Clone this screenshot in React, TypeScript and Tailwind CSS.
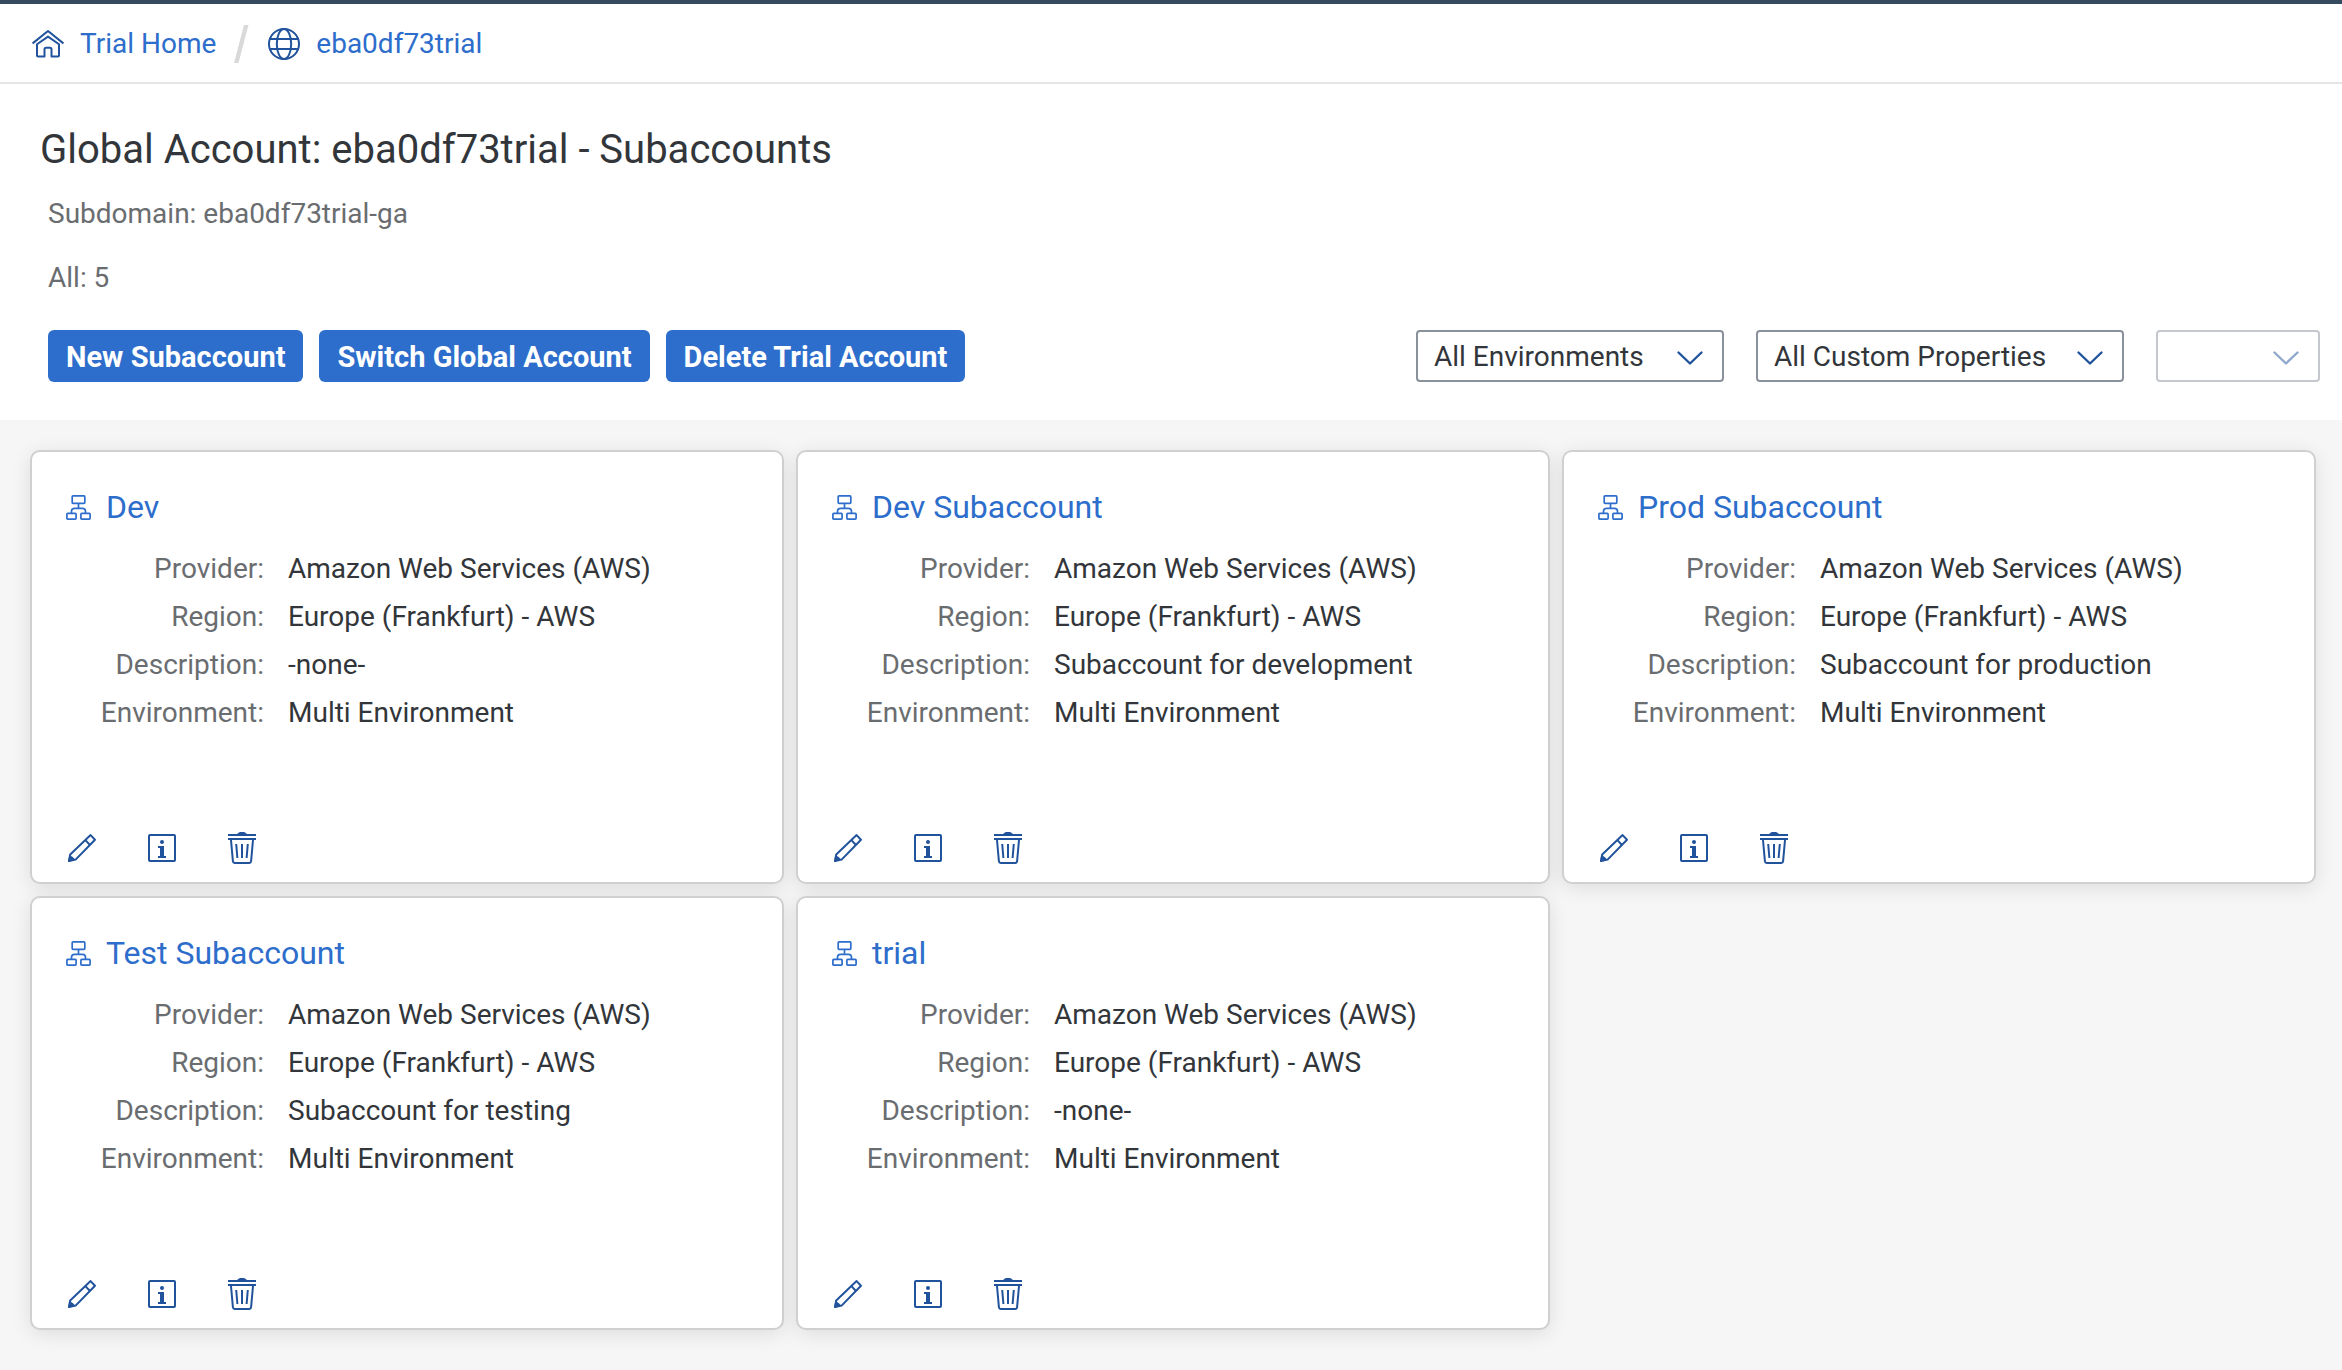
import { useState } from 'react'
import type { ReactNode } from 'react'

type Subaccount = { name: string; description: string }

const subaccounts: Subaccount[] = [
  { name: 'Dev', description: '-none-' },
  { name: 'Dev Subaccount', description: 'Subaccount for development' },
  { name: 'Prod Subaccount', description: 'Subaccount for production' },
  { name: 'Test Subaccount', description: 'Subaccount for testing' },
  { name: 'trial', description: '-none-' },
]

function HomeIcon() {
  return (
    <svg className="size-8 shrink-0" viewBox="0 0 32 32" fill="none" stroke="#21539c" strokeWidth="2" strokeLinejoin="round" aria-hidden="true">
      <path d="M0.6 15.4 16 3l15.4 12.4" />
      <path d="M5 16.2v11.3a1 1 0 0 0 1 1h6.5v-7.2a1.5 1.5 0 0 1 1.5-1.5h4a1.5 1.5 0 0 1 1.5 1.5v7.2H26a1 1 0 0 0 1-1V16.2L16 8.6Z" />
    </svg>
  )
}

function GlobeIcon() {
  return (
    <svg className="size-8 shrink-0" viewBox="0 0 32 32" fill="none" stroke="#21539c" strokeWidth="2" aria-hidden="true">
      <circle cx="16" cy="16" r="15" />
      <ellipse cx="16" cy="16" rx="7.2" ry="15" />
      <path d="M2 11h28M2 21h28" />
    </svg>
  )
}

function HierarchyIcon() {
  return (
    <svg className="h-[26px] w-[26px] shrink-0" viewBox="0 0 26 26" fill="none" stroke="#2d6dcb" strokeWidth="1.7" strokeLinejoin="round" aria-hidden="true">
      <rect x="6.200" y="1.900" width="12.600" height="7.400" rx="0.8" />
      <rect x="0.9" y="19.400" width="9.200" height="5.700" rx="0.8" />
      <rect x="14.900" y="19.400" width="9.200" height="5.700" rx="0.8" />
      <path d="M12.500 9.300v5M5.500 19.400v-2.100a3 3 0 0 1 3-3h8a3 3 0 0 1 3 3v2.100" />
    </svg>
  )
}

function PencilIcon() {
  return (
    <svg className="size-8" viewBox="0 0 32 32" fill="none" stroke="#21539c" strokeWidth="2" strokeLinejoin="round" aria-hidden="true">
      <path d="M24.600 3.100 29 7.800 9.600 27.600 3 29l1.200-6.600Z" />
      <path d="m19.600 8.400 4.400 4.600" />
      <path d="M3.200 23.400c2.600.3 4.800 2 5.600 4.600L2 30Z" fill="#21539c" stroke="none" />
    </svg>
  )
}

function InfoIcon() {
  return (
    <svg className="size-8" viewBox="0 0 32 32" fill="none" aria-hidden="true">
      <rect x="3" y="3" width="26" height="26" rx="1" stroke="#21539c" strokeWidth="2" />
      <circle cx="16" cy="10" r="2" fill="#21539c" />
      <path d="M12 14h6v10h2v2h-8v-2h2v-8h-2Z" fill="#21539c" />
    </svg>
  )
}

function TrashIcon() {
  return (
    <svg className="size-8" viewBox="0 0 32 32" fill="none" stroke="#21539c" strokeWidth="2" aria-hidden="true">
      <path d="M2 3h28M2 7h28" />
      <path d="M11 2.4C12 .6 13.4 0 16 0s4 .6 5 2.4Z" fill="#21539c" stroke="none" />
      <path d="m5 8 1.9 21.200A2 2 0 0 0 8.800 31h14.400a2 2 0 0 0 1.900-1.800L27 8" />
      <path d="m10.200 12 1.200 14M16 12v14M21.800 12l-1.200 14" />
    </svg>
  )
}

function FilterSelect({ label, value, width, disabled }: { label: string; value: string; width: string; disabled?: boolean }) {
  const [selected, setSelected] = useState(value)
  return (
    <div className={`relative ${width}`}>
      <select
        aria-label={label}
        disabled={disabled}
        value={selected}
        onChange={(e) => setSelected(e.target.value)}
        className="block h-[52px] w-full appearance-none rounded-[4px] border-2 border-[#89919a] bg-white pt-0.5 pr-16 pl-4 text-[28px] leading-9 text-[#32363a] disabled:border-[#c4c8cc]"
      >
        <option value={value}>{value}</option>
      </select>
      <svg
        className={`pointer-events-none absolute top-5 right-5 h-4 w-7 ${disabled ? 'opacity-50' : ''}`}
        viewBox="0 0 28 16"
        fill="none"
        stroke="#21539c"
        strokeWidth="2.400"
        strokeLinecap="round"
        strokeLinejoin="round"
        aria-hidden="true"
      >
        <path d="m2.500 2.500 11.500 11 11.500-11" />
      </svg>
    </div>
  )
}

function ActionButton({ children }: { children: ReactNode }) {
  return (
    <button type="button" className="h-[52px] rounded-[6px] bg-[#2d6dcb] px-[18px] pt-0.5 text-[29px] leading-9 font-bold whitespace-nowrap text-white">
      {children}
    </button>
  )
}

function SubaccountCard({ name, description }: Subaccount) {
  const rows = [
    ['Provider:', 'Amazon Web Services (AWS)'],
    ['Region:', 'Europe (Frankfurt) - AWS'],
    ['Description:', description],
    ['Environment:', 'Multi Environment'],
  ]
  return (
    <article className="flex min-h-[434px] flex-col rounded-[10px] border-2 border-[#d0d0d0] bg-white px-[34px] pt-[33px] pb-[18px] shadow-[0_4px_20px_rgba(0,0,0,0.1)]">
      <h2 className="text-[32px] leading-[44px] text-[#2d6dcb]">
        <a href="#" className="inline-flex items-center gap-[14px]">
          <HierarchyIcon />
          {name}
        </a>
      </h2>
      <dl className="mt-[14px] grid grid-cols-[198px_1fr] gap-x-6 text-[28px] leading-[48px]">
        {rows.map(([term, value]) => (
          <div key={term} className="contents">
            <dt className="text-right text-[#6a6d70]">{term}</dt>
            <dd className="text-[#32363a]">{value}</dd>
          </div>
        ))}
      </dl>
      <div className="mt-auto flex gap-12">
        <button type="button" aria-label={`Edit ${name}`}><PencilIcon /></button>
        <button type="button" aria-label={`Details of ${name}`}><InfoIcon /></button>
        <button type="button" aria-label={`Delete ${name}`}><TrashIcon /></button>
      </div>
    </article>
  )
}

export default function App() {
  return (
    <div className="flex min-h-screen flex-col border-t-4 border-[#354a5f] bg-[#f6f6f6] font-['Roboto',sans-serif]">
      <nav aria-label="Breadcrumb" className="flex h-20 items-center border-b-2 border-[#e5e5e5] bg-white px-8 pt-0.5 text-[28px] leading-9 text-[#2d6dcb]">
        <a href="#" className="flex items-center gap-4"><HomeIcon />Trial Home</a>
        <svg className="mx-[18px] h-[38px] w-4" viewBox="0 0 16 38" aria-hidden="true">
          <path d="M0 38h4.500L14.500 0H10Z" fill="#d9d9d9" />
        </svg>
        <a href="#" className="flex items-center gap-4"><GlobeIcon />eba0df73trial</a>
      </nav>
      <header className="bg-white pt-[38px] pr-[22px] pb-[38px] pl-10">
        <h1 className="text-[40px] leading-[56px] text-[#32363a]">Global Account: eba0df73trial - Subaccounts</h1>
        <div className="pl-2">
          <p className="mt-4 text-[28px] leading-[40px] text-[#6a6d70]">Subdomain: eba0df73trial-ga</p>
          <p className="mt-6 text-[28px] leading-[40px] text-[#6a6d70]">All: 5</p>
          <div className="mt-8 flex items-center justify-between">
            <div className="flex gap-4">
              <ActionButton>New Subaccount</ActionButton>
              <ActionButton>Switch Global Account</ActionButton>
              <ActionButton>Delete Trial Account</ActionButton>
            </div>
            <div className="flex gap-8">
              <FilterSelect label="Environment" value="All Environments" width="w-[308px]" />
              <FilterSelect label="Custom properties" value="All Custom Properties" width="w-[368px]" />
              <FilterSelect label="Property value" value="" width="w-[164px]" disabled />
            </div>
          </div>
        </div>
      </header>
      <main className="grid grid-cols-3 gap-3 pt-[30px] pr-[26px] pb-10 pl-[30px]">
        {subaccounts.map((account) => (
          <SubaccountCard key={account.name} {...account} />
        ))}
      </main>
    </div>
  )
}
